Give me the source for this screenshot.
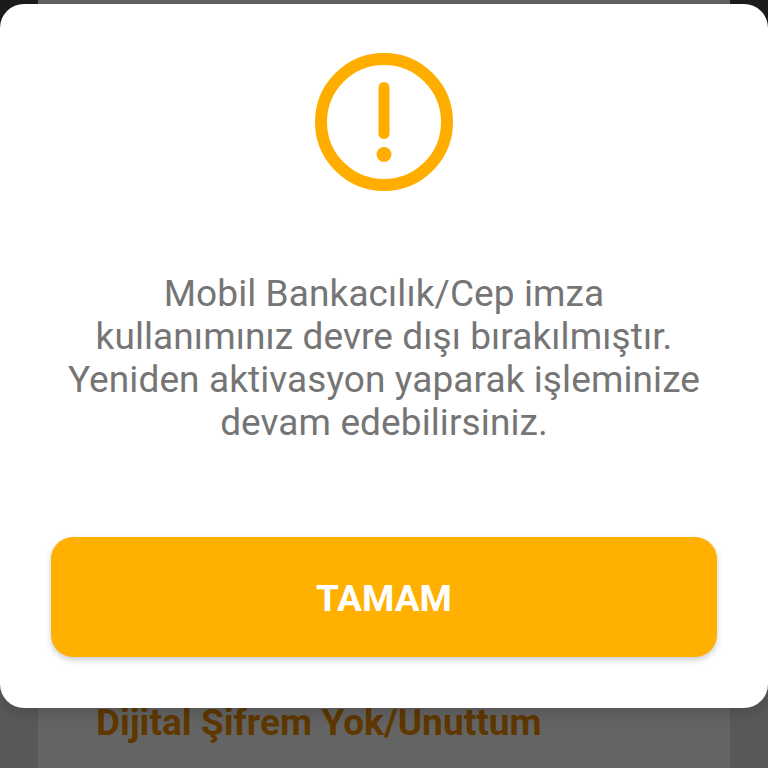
<style>
  :global(body) { margin: 0; background: #1c1c1c; }
  .screen { position: relative; width: 768px; height: 768px; overflow: hidden; font-family: Roboto, "Liberation Sans", sans-serif; background: linear-gradient(#1c1c1c 0, #1c1c1c 60px, #595959 60px); }
  .page { box-sizing: border-box; height: 768px; margin: 0 38px; padding: 703px 0 0 58px; background: #646464; }
  .link { font-size: 37px; font-weight: 700; line-height: 40px; letter-spacing: .04px; color: #5f3800; white-space: nowrap; }
  .modal { position: absolute; top: 4px; left: 0; right: 0; box-sizing: border-box; height: 704px; padding: 48px 51px 0 51px; background: #fff; border-radius: 24px; box-shadow: 0 4px 18px rgba(0,0,0,.18); display: flex; flex-direction: column; align-items: center; }
  .icon { display: block; width: 140px; height: 140px; flex: none; }
  .msg { margin: 80px -30px 0; text-align: center; font-size: 37px; line-height: 43px; letter-spacing: .1px; color: #757575; white-space: nowrap; }
  .btn { margin-top: 93px; width: 100%; height: 120px; flex: none; border: 0; border-radius: 22px; background: #ffb000; color: #fff; font: 700 37px Roboto, "Liberation Sans", sans-serif; box-shadow: 0 3px 6px rgba(0,0,0,.2); padding: 2px 0 0; }
</style>

<div class="screen">
  <div class="page">
    <div class="link">Dijital Şifrem Yok/Unuttum</div>
  </div>
  <div class="modal">
    <svg class="icon" viewBox="0 0 140 140" aria-hidden="true">
      <circle cx="70" cy="70" r="63" fill="none" stroke="#ffae00" stroke-width="12" />
      <line x1="70" y1="35.5" x2="70" y2="81.5" stroke="#ffae00" stroke-width="11" stroke-linecap="round" />
      <circle cx="70" cy="102.5" r="7.5" fill="#ffae00" />
    </svg>
    <p class="msg">Mobil Bankacılık/Cep imza<br />kullanımınız devre dışı bırakılmıştır.<br />Yeniden aktivasyon yaparak işleminize<br />devam edebilirsiniz.</p>
    <button class="btn">TAMAM</button>
  </div>
</div>
